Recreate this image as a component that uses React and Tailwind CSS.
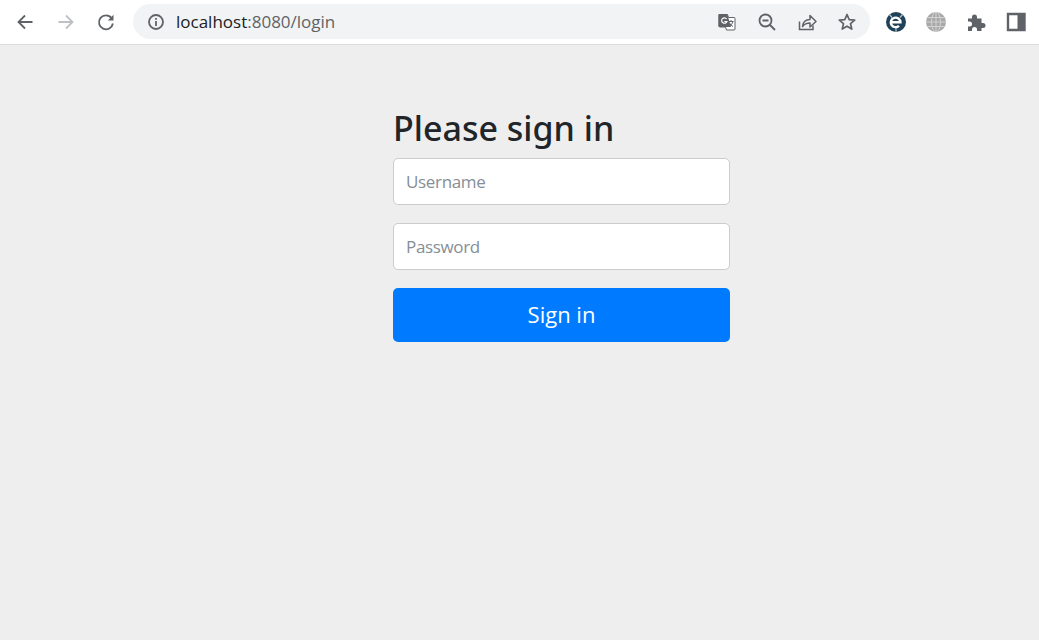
import React from 'react';

const font = "font-['Open_Sans','Noto_Sans',sans-serif]";

const ToolIcon = ({ children, className = '' }) => (
  <svg viewBox="0 0 20 20" width="20" height="20" fill="none" className={`shrink-0 ${className}`}>
    {children}
  </svg>
);

const Toolbar = () => (
  <div className="flex h-[45px] items-center border-b border-[#dadce0] bg-white pb-px">
    <div className="flex w-[133px] shrink-0 items-center gap-5 pl-4">
      <ToolIcon className="-translate-x-px">
        <path d="M17.5 10H3.5M10 3.5 3.5 10l6.5 6.5" stroke="#5f6368" strokeWidth="1.8" />
      </ToolIcon>
      <ToolIcon>
        <path d="M2.5 10h14M10 3.5l6.5 6.5-6.5 6.5" stroke="#bdc1c6" strokeWidth="1.8" />
      </ToolIcon>
      <ToolIcon>
        <path d="M15.6 6.1A7 7 0 1 0 16.9 11.5" stroke="#5f6368" strokeWidth="1.8" />
        <path d="M17.5 2.8v5.7h-5.7z" fill="#5f6368" />
      </ToolIcon>
    </div>
    <div className="flex h-[35px] w-[737px] shrink-0 items-center rounded-full bg-[#f1f3f4] px-[13px]">
      <ToolIcon>
        <circle cx="10" cy="10" r="7" stroke="#5f6368" strokeWidth="1.8" />
        <path d="M10 9v5" stroke="#5f6368" strokeWidth="1.8" />
        <path d="M10 6v1.8" stroke="#5f6368" strokeWidth="1.8" />
      </ToolIcon>
      <div className={`ml-[10px] flex-1 pb-px text-[17px] leading-none text-[#5f6368] ${font}`}>
        <span className="text-[#202124]">localhost</span>:8080/login
      </div>
      <div className="flex items-center gap-5">
        <ToolIcon>
          <path d="M2 2.5h8.5l1 3h5.500a1 1 0 0 1 1 1V17a1 1 0 0 1-1 1H9.500l-1-3H3a1 1 0 0 1-1-1z" fill="#fff" stroke="#5f6368" strokeWidth="1" />
          <path d="M1.5 3a1 1 0 0 1 1-1h7.700L14 15H2.500a1 1 0 0 1-1-1z" fill="#5f6368" />
          <path d="M9.600 7a2.700 2.700 0 1 0 .3 2.500H7.300" stroke="#fff" strokeWidth="1.2" />
          <path d="M11.500 9.500h5M14 8v1.500M16 9.500c-.5 2-2 3.800-4 5M12.500 11c.7 1.400 2 2.800 3.500 3.500" stroke="#5f6368" strokeWidth="1" />
        </ToolIcon>
        <ToolIcon>
          <circle cx="8.5" cy="8.5" r="6" stroke="#5f6368" strokeWidth="1.8" />
          <path d="M5.500 8.500h6M13 13l5 5" stroke="#5f6368" strokeWidth="1.8" />
        </ToolIcon>
        <ToolIcon>
          <path d="M2.500 9.500v8h13.500v-4" stroke="#5f6368" strokeWidth="1.5" />
          <path d="M5.500 14.500c.5-4.500 3.500-7 7.500-7V3.500l6 6-6 5.500v-4c-3 0-5.500.8-7.500 3.500z" stroke="#5f6368" strokeWidth="1.5" strokeLinejoin="round" />
        </ToolIcon>
        <ToolIcon>
          <path d="M10 2.500l2.200 5.100 5.500.5-4.200 3.600 1.300 5.400L10 14.200l-4.800 2.900 1.300-5.400-4.200-3.600 5.500-.5z" stroke="#5f6368" strokeWidth="1.7" strokeLinejoin="round" />
        </ToolIcon>
      </div>
    </div>
    <div className="ml-4 flex items-center gap-5">
      <ToolIcon>
        <circle cx="10" cy="10" r="10" fill="#1f4159" />
        <path d="M4.800 10.200h9.600a4.800 4.800 0 1 0-1.400 3.600" stroke="#fff" strokeWidth="2.4" />
        <path d="M3.500 2.500l2.500 3M16.500 2.500l-2.500 3M10 16v4" stroke="#b9c6cf" strokeWidth="1.2" />
      </ToolIcon>
      <ToolIcon>
        <circle cx="10" cy="10" r="10" fill="#a9a9a9" />
        <ellipse cx="10" cy="10" rx="4.5" ry="10" stroke="#d2d2d2" strokeWidth="1" />
        <path d="M10 0v20M0 10h20M1.500 5.500h17M1.500 14.500h17" stroke="#d2d2d2" strokeWidth="1" />
      </ToolIcon>
      <ToolIcon>
        <path d="M2 6.500h4V5a2.500 2.500 0 0 1 5 0v1.500h4.500V11H17a2.500 2.500 0 0 1 0 5h-1.500v3H11v-1.500a2.500 2.500 0 0 0-5 0V19H2v-4.500h1.500a2.500 2.500 0 0 0 0-5H2z" fill="#5f6368" />
      </ToolIcon>
      <ToolIcon>
        <path d="M2 2h16.500v16H2z" stroke="#5f6368" strokeWidth="2.4" />
        <path d="M11.500 2h7v16h-7z" fill="#5f6368" />
      </ToolIcon>
    </div>
  </div>
);

const Field = ({ placeholder, type = 'text' }) => (
  <input
    type={type}
    placeholder={placeholder}
    className={`block h-[47px] w-full rounded-[5px] border border-[#cccccc] bg-white px-3 text-[17px] tracking-[-0.02em] text-[#495057] outline-none placeholder:text-[#868e96] ${font}`}
  />
);

export default function App() {
  return (
    <div className="flex h-[640px] flex-col overflow-hidden bg-[#eeeeee]">
      <Toolbar />
      <form className="ml-[393px] mt-[60px] flex w-[337px] flex-col" onSubmit={e => e.preventDefault()}>
        <h1 className="mb-[7px] font-['Noto_Sans','Open_Sans',sans-serif] text-[34px] font-medium leading-[46px] text-[#212529]">Please sign in</h1>
        <div className="flex flex-col gap-[18px]">
          <Field placeholder="Username" />
          <Field placeholder="Password" type="password" />
          <button className={`h-[54px] rounded-[5px] bg-[#007bff] pb-[2px] text-[22px] text-white ${font}`}>Sign in</button>
        </div>
      </form>
    </div>
  );
}
